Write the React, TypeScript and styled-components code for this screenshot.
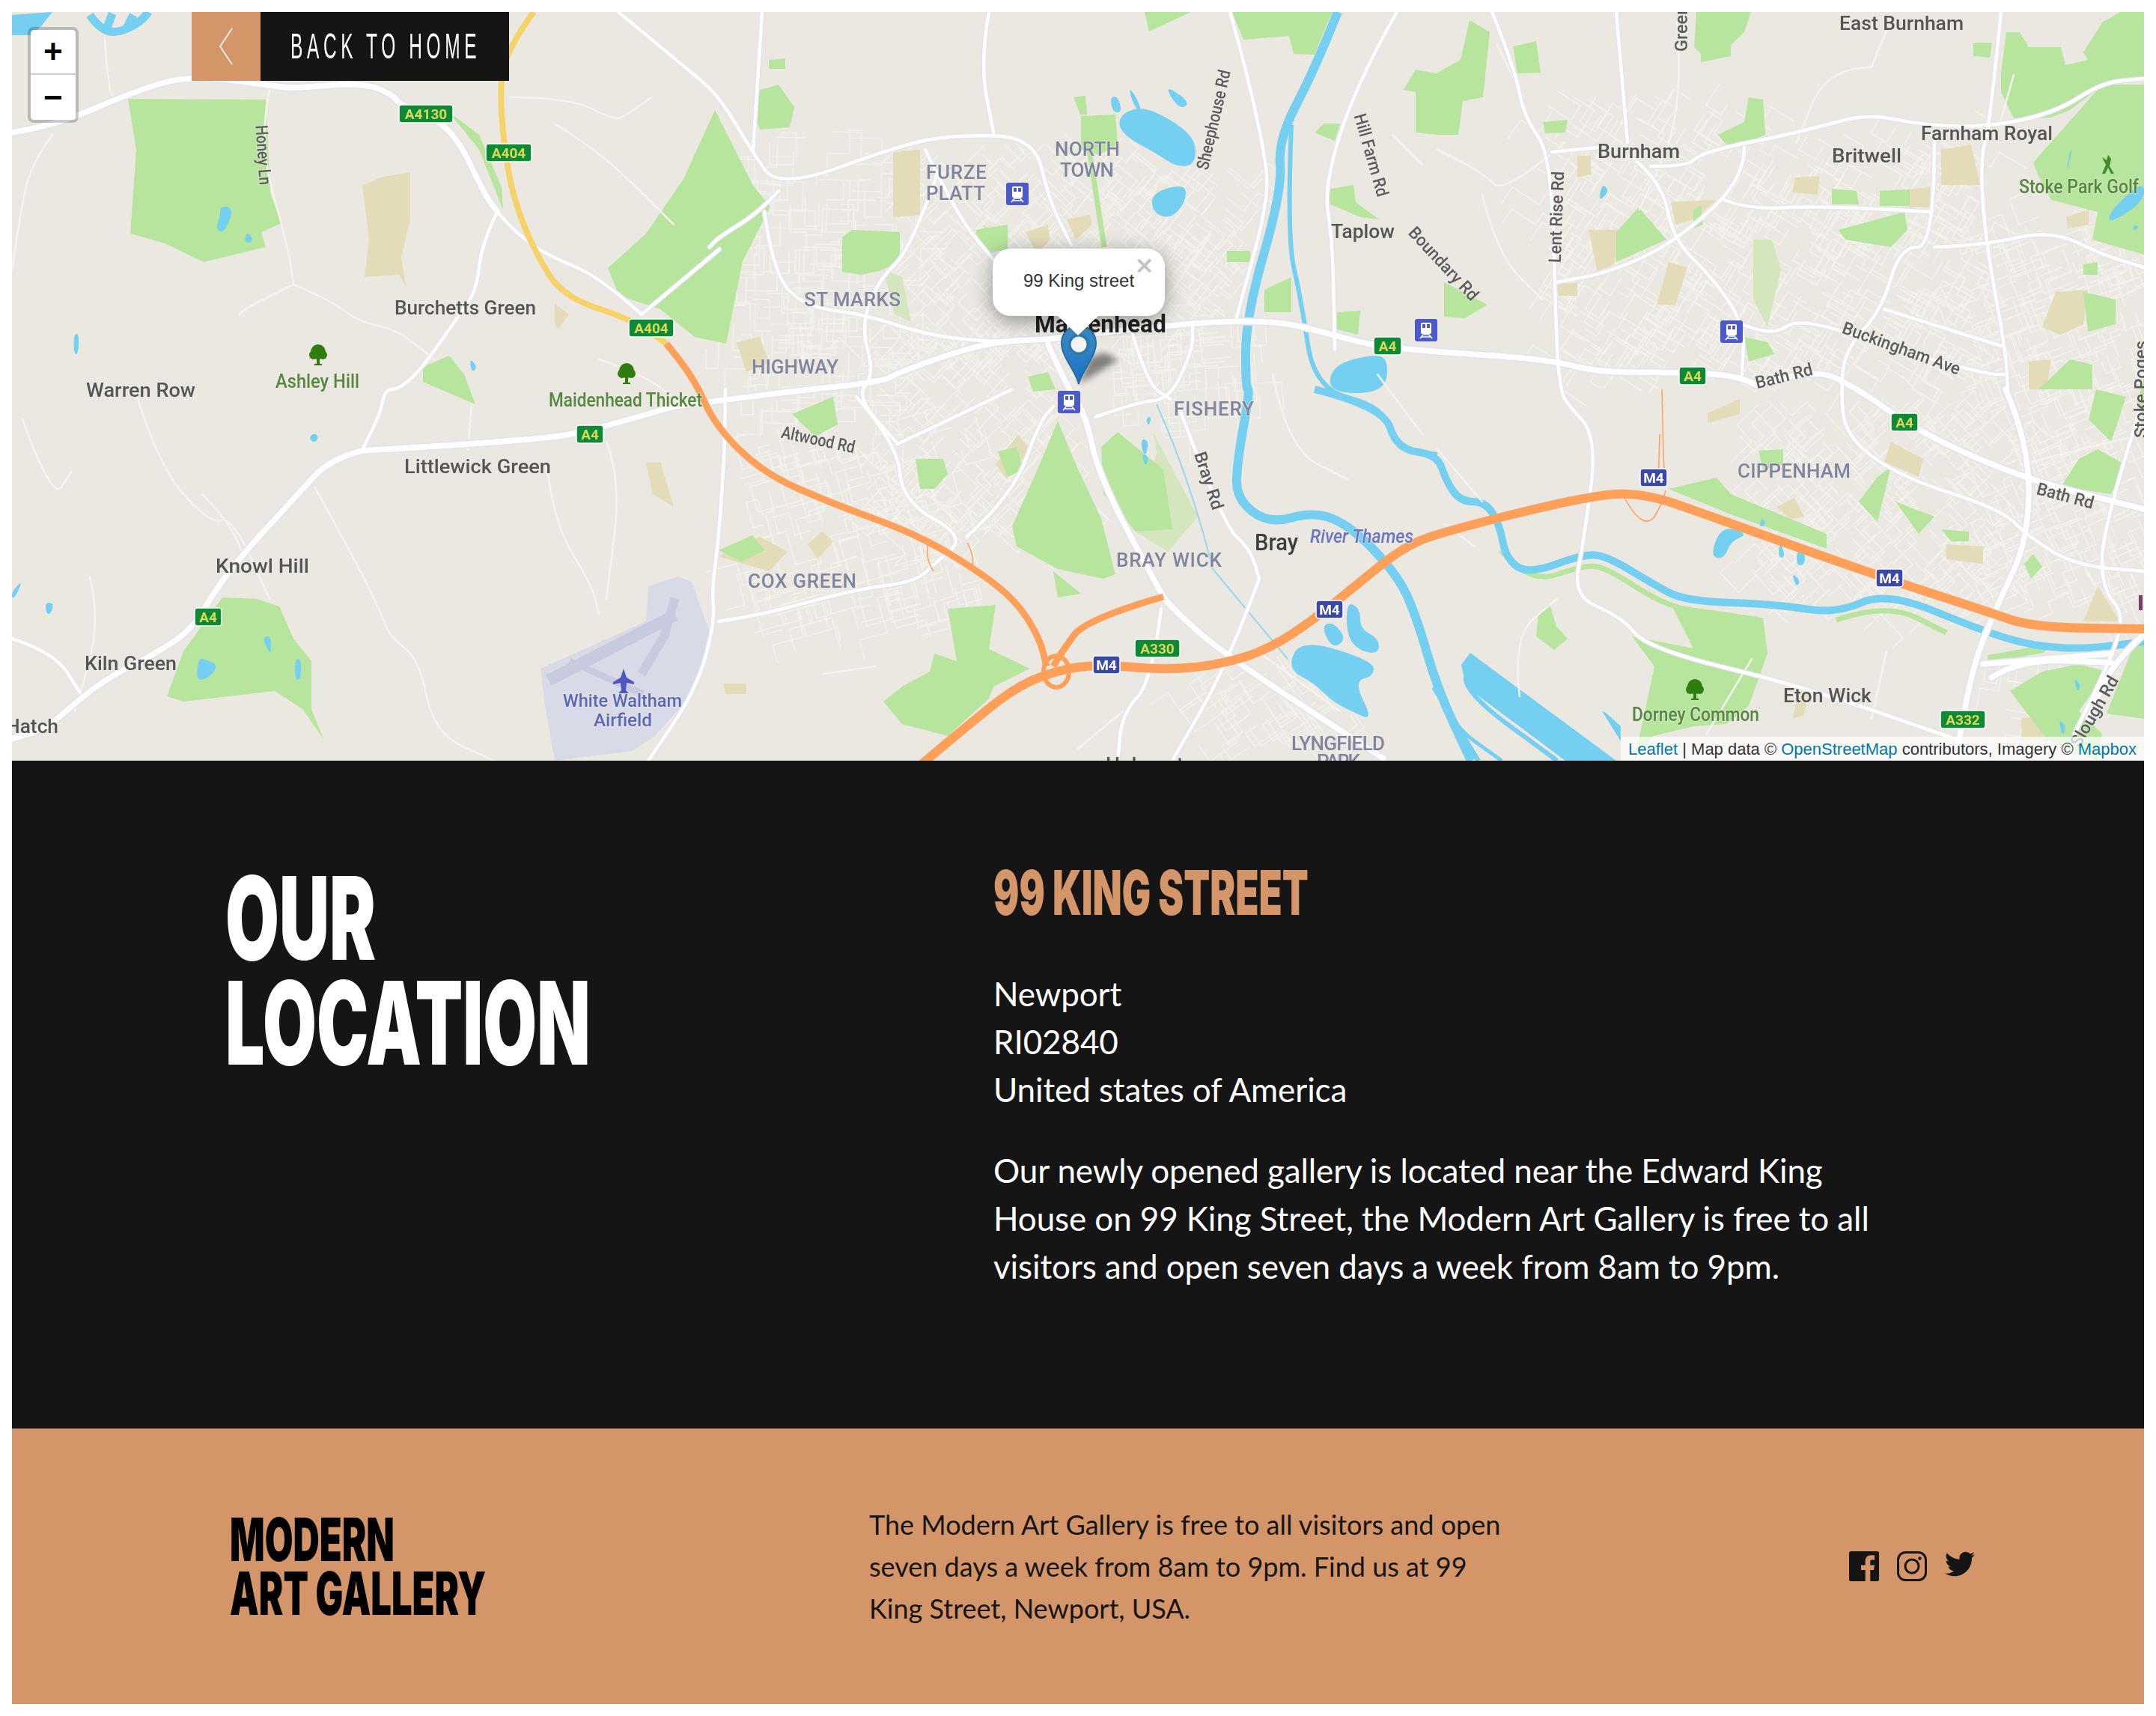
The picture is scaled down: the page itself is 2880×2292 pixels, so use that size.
import styled, { createGlobalStyle } from 'styled-components';
import { FaTwitter } from 'react-icons/fa';

const GlobalStyle = createGlobalStyle`
  body {
    margin: 16px;
    background: #fff;
    font-family: "Lato", "Liberation Sans", sans-serif;
  }
`;

const Page = styled.div`
  display: flex;
  flex-direction: column;
`;

/* ---------- map data: coordinates are page pixels ---------- */

const parks: number[][] = [
  [171, 132, 355, 133, 361, 257, 376, 298, 349, 310, 355, 330, 272, 350, 220, 325, 174, 312, 182, 200],
  [812, 358, 863, 312, 913, 239, 955, 147, 1006, 248, 1029, 276, 992, 349, 970, 459, 928, 450, 882, 413, 827, 395],
  [600, 150, 640, 180, 670, 250, 672, 280, 640, 200],
  [297, 798, 343, 800, 373, 810, 392, 853, 416, 883, 416, 947, 432, 987, 404, 947, 367, 923, 245, 937, 223, 930, 245, 870],
  [1529, 16, 1591, 16, 1535, 42],
  [1646, 16, 1780, 16, 1768, 43, 1756, 73, 1728, 72, 1722, 48, 1661, 53],
  [1875, 120, 1891, 93, 1920, 98, 1920, 180, 1891, 177, 1891, 123],
  [1920, 97, 1951, 80, 1963, 27, 1990, 43, 1981, 130, 1954, 135, 1948, 180, 1920, 180],
  [2021, 62, 2052, 55, 2058, 97, 2027, 98],
  [2266, 16, 2339, 16, 2330, 43, 2312, 60, 2312, 75, 2272, 83, 2272, 72, 2263, 63],
  [2673, 97, 2680, 43, 2698, 43, 2710, 63, 2753, 63, 2759, 87, 2789, 80, 2783, 70, 2808, 30, 2832, 16, 2864, 16, 2864, 103, 2814, 110, 2765, 147, 2740, 157, 2691, 160, 2673, 123],
  [2716, 217, 2808, 113, 2864, 113, 2864, 340, 2795, 320, 2802, 283, 2740, 267, 2722, 233],
  [2295, 180, 2330, 163, 2336, 130, 2355, 133, 2358, 180, 2336, 190, 2306, 193],
  [2456, 307, 2544, 283, 2548, 307, 2526, 330, 2465, 320],
  [1413, 562, 1437, 620, 1471, 693, 1490, 767, 1474, 773, 1413, 760, 1358, 730, 1352, 703, 1389, 620],
  [1407, 763, 1444, 793, 1413, 798],
  [1471, 597, 1493, 577, 1554, 627, 1566, 707, 1517, 710, 1474, 660],
  [1266, 813, 1330, 808, 1321, 867, 1376, 893, 1327, 917, 1321, 933, 1266, 983, 1205, 967, 1180, 937, 1205, 917, 1242, 897, 1248, 873, 1278, 883],
  [1058, 553, 1113, 530, 1119, 567, 1089, 583],
  [1223, 613, 1260, 613, 1266, 633, 1248, 653, 1229, 653],
  [1333, 603, 1358, 597, 1367, 627, 1346, 637],
  [960, 735, 1005, 715, 1022, 735, 990, 750],
  [1444, 155, 1490, 153, 1493, 193, 1468, 207, 1444, 200],
  [1434, 130, 1450, 128, 1452, 153, 1443, 153],
  [1125, 317, 1138, 307, 1202, 310, 1202, 350, 1174, 362, 1150, 367, 1125, 363],
  [1303, 307, 1346, 300, 1346, 333, 1321, 337],
  [1756, 177, 1768, 165, 1790, 165, 1783, 188],
  [1774, 253, 1808, 247, 1811, 270, 1842, 293, 1817, 290, 1777, 273],
  [1639, 335, 1670, 335, 1670, 350, 1639, 350],
  [1689, 387, 1725, 370, 1725, 417, 1689, 417],
  [1786, 417, 1817, 415, 1814, 447, 1786, 440],
  [1027, 80, 1049, 78, 1049, 92, 1027, 92],
  [1015, 120, 1040, 113, 1061, 143, 1055, 170, 1015, 173, 1009, 157],
  [1373, 503, 1400, 497, 1410, 520, 1380, 523],
  [1303, 310, 1340, 303, 1343, 330, 1320, 340],
  [2232, 807, 2355, 825, 2361, 873, 2336, 943, 2306, 967, 2263, 970, 2208, 983, 2183, 1016, 2210, 890, 2180, 850, 2262, 866, 2258, 858],
  [2055, 820, 2070, 807, 2079, 837, 2094, 853, 2076, 868, 2052, 850],
  [2229, 653, 2293, 638, 2312, 660, 2440, 713, 2440, 733, 2404, 720, 2312, 687],
  [2349, 602, 2382, 600, 2382, 620, 2355, 627],
  [2483, 670, 2508, 637, 2526, 623, 2508, 697],
  [2532, 670, 2584, 690, 2563, 713],
  [2593, 707, 2630, 710, 2630, 723, 2606, 723],
  [2777, 613, 2802, 600, 2838, 620, 2820, 660, 2753, 650],
  [2704, 753, 2716, 740, 2728, 757, 2713, 773],
  [2685, 923, 2728, 897, 2777, 887, 2814, 897, 2777, 950, 2808, 980, 2802, 1016, 2734, 987],
  [2814, 953, 2851, 860, 2864, 860, 2864, 960],
  [2655, 875, 2740, 860, 2730, 872, 2655, 885],
  [2061, 163, 2094, 160, 2091, 177, 2064, 178],
  [2189, 277, 2226, 320, 2159, 350, 2159, 310],
  [1929, 377, 1935, 380, 1987, 407, 1957, 425, 1929, 423],
  [2447, 252, 2480, 255, 2483, 273, 2447, 273],
  [2511, 255, 2551, 253, 2551, 275, 2511, 275],
  [2330, 450, 2361, 457, 2370, 473, 2336, 483],
  [2783, 390, 2826, 400, 2826, 433, 2789, 443],
  [2734, 510, 2765, 480, 2795, 487, 2795, 520, 2722, 520],
  [2783, 353, 2802, 350, 2802, 367, 2783, 367],
  [2636, 57, 2661, 57, 2658, 77, 2636, 75],
  [2262, 280, 2272, 275, 2275, 300, 2262, 305],
  [565, 490, 600, 475, 620, 500, 635, 540, 565, 510],
  [2800, 520, 2840, 530, 2820, 590, 2790, 560],
  [2855, 540, 2864, 500, 2864, 560],
];

const paleParks: number[][] = [
  [1540, 577, 1600, 690, 1560, 737, 1517, 710, 1566, 707],
  [2342, 320, 2367, 320, 2379, 360, 2361, 437, 2342, 400],
  [1180, 360, 1205, 370, 1217, 430, 1195, 420],
];

const sand: number[][] = [
  [508, 237, 548, 230, 548, 293, 536, 343, 542, 382, 533, 367, 487, 370, 493, 320, 484, 248],
  [1193, 203, 1229, 200, 1229, 287, 1193, 290],
  [1425, 293, 1456, 287, 1459, 300, 1437, 320],
  [984, 457, 1015, 450, 1027, 483, 997, 497],
  [2232, 270, 2293, 267, 2263, 293, 2238, 300],
  [2122, 307, 2165, 307, 2156, 353, 2134, 363],
  [2107, 208, 2125, 208, 2125, 233, 2107, 237],
  [2398, 237, 2431, 235, 2428, 260, 2394, 257],
  [2593, 200, 2633, 193, 2645, 247, 2593, 247],
  [2551, 253, 2578, 250, 2578, 277, 2551, 277],
  [2229, 350, 2254, 357, 2238, 407, 2213, 407],
  [2079, 380, 2107, 377, 2107, 395, 2082, 395],
  [2746, 390, 2789, 387, 2783, 433, 2753, 447, 2728, 437],
  [2710, 483, 2740, 480, 2734, 520, 2710, 520],
  [2517, 617, 2526, 590, 2569, 613, 2563, 637],
  [2600, 727, 2649, 730, 2649, 753, 2600, 747],
  [2281, 552, 2324, 533, 2324, 553, 2281, 565],
  [2373, 677, 2397, 665, 2410, 690, 2391, 693],
  [2783, 830, 2802, 783, 2832, 830],
  [1015, 717, 1052, 737, 1027, 763, 960, 743],
  [1079, 727, 1098, 710, 1113, 723, 1092, 747],
  [966, 913, 997, 913, 997, 927, 969, 927],
  [863, 618, 882, 617, 900, 677, 872, 660],
  [741, 405, 760, 420, 745, 440, 741, 430],
  [1313, 300, 1330, 310, 1320, 330],
  [1370, 310, 1400, 300, 1402, 320, 1385, 340],
  [1545, 605, 1570, 645, 1555, 660, 1538, 630],
  [2700, 90, 2710, 90, 2700, 100],
  [2760, 290, 2790, 280, 2790, 300, 2762, 305],
  [2400, 932, 2415, 925, 2410, 955, 2395, 960],
  [2700, 960, 2760, 950, 2760, 990, 2700, 990],
  [1330, 620, 1360, 580, 1375, 600, 1345, 640],
];

const lakes: number[][] = [
  [294, 275, 309, 277, 309, 290, 298, 312, 288, 305, 294, 290],
  [330, 310, 338, 318, 334, 325, 326, 322],
  [99, 445, 106, 447, 104, 475, 98, 470],
  [420, 578, 426, 584, 420, 592, 412, 585],
  [16, 790, 30, 775, 22, 795, 16, 800],
  [60, 805, 72, 805, 68, 820, 62, 820],
  [350, 852, 362, 848, 362, 872, 358, 868],
  [394, 880, 402, 880, 402, 908, 394, 908],
  [265, 880, 272, 880, 292, 888, 280, 905, 262, 910],
  [627, 478, 638, 490, 630, 498],
  [1493, 157, 1517, 143, 1548, 150, 1597, 183, 1597, 220, 1572, 223, 1548, 207, 1499, 180],
  [1483, 130, 1493, 128, 1499, 150, 1486, 150],
  [1507, 117, 1515, 125, 1526, 148, 1516, 145],
  [1554, 112, 1591, 137, 1575, 147],
  [1539, 257, 1584, 245, 1584, 270, 1563, 293, 1539, 283],
  [1780, 487, 1835, 473, 1855, 480, 1850, 525, 1774, 525],
  [1719, 893, 1738, 853, 1835, 883, 1835, 903, 1808, 910, 1835, 963, 1805, 950, 1780, 937, 1756, 913],
  [1765, 837, 1780, 830, 1799, 853, 1780, 867],
  [1799, 803, 1817, 813, 1817, 840, 1842, 853, 1842, 873, 1817, 870, 1799, 850],
  [2300, 702, 2336, 713, 2312, 723, 2303, 747, 2284, 743],
  [2353, 690, 2360, 700, 2350, 705],
  [2378, 722, 2385, 745, 2375, 745],
  [2400, 735, 2412, 740, 2410, 755, 2400, 755],
  [2393, 765, 2405, 775, 2400, 785],
  [1530, 560, 1538, 555, 1535, 570],
  [1525, 585, 1535, 590, 1530, 610, 1525, 600],
  [1525, 605, 1535, 610, 1530, 625],
  [2140, 245, 2150, 255, 2135, 270],
  [2765, 200, 2768, 200, 2760, 235],
  [2864, 240, 2820, 280, 2815, 300, 2864, 270],
  [2850, 300, 2858, 302, 2850, 310],
  [2770, 905, 2780, 915, 2775, 925],
  [2750, 960, 2760, 970, 2755, 985],
];

// shapes with straight edges: the rowing lake and the top corner pools
const sharpLakes: number[][] = [
  [1952, 888, 1964, 872, 2159, 1016, 2091, 1016, 1958, 917],
  [16, 20, 70, 16, 55, 35, 40, 47, 16, 47],
  [2140, 950, 2145, 952, 2165, 970, 2165, 990],
];

const rivers: [number, number[]][] = [
  [12, [1787, 16, 1756, 93, 1707, 187, 1713, 253, 1664, 423, 1664, 520, 1670, 520, 1652, 620, 1652, 667, 1695, 700, 1756, 683, 1805, 703, 1866, 767, 1891, 820, 1920, 920, 1965, 1016]],
  [6, [1725, 167, 1719, 317, 1738, 400, 1756, 520, 1848, 543, 1866, 600, 1920, 607]],
  [10, [1756, 520, 1848, 543, 1866, 600, 1920, 607, 1932, 643, 1951, 670, 1984, 670, 2003, 700, 2012, 747, 2042, 767, 2116, 740, 2147, 743, 2208, 780, 2251, 803, 2373, 807, 2453, 820, 2520, 790, 2649, 843, 2716, 863, 2789, 867, 2864, 857]],
  [5, [1920, 907, 1932, 963, 2006, 1016]],
  [6, [1958, 905, 1956, 925, 2080, 1016]],
];

const riverBanks: number[][] = [
  [2005, 735, 2042, 780, 2116, 755, 2145, 758, 2210, 800, 2252, 815],
  [2453, 828, 2520, 805, 2600, 845],
];

const majorRoads: number[][] = [
  [16, 177, 73, 168, 184, 120, 257, 100, 367, 115, 392, 118, 484, 110, 526, 127, 533, 140, 603, 167, 649, 263, 664, 282],
  [484, 602, 722, 588, 796, 573, 900, 543],
  [484, 602, 441, 613, 398, 660, 318, 747, 282, 797, 257, 840, 208, 873, 135, 910, 80, 957, 61, 973, 16, 987],
  [900, 543, 1035, 525, 1180, 510, 1200, 497, 1317, 457, 1400, 453],
  [1400, 453, 1560, 433, 1701, 427, 1780, 447, 1835, 462, 1920, 470, 2067, 480, 2134, 497, 2214, 497, 2312, 500, 2349, 515],
  [2349, 515, 2422, 490, 2483, 520, 2563, 577, 2704, 640, 2864, 680],
  [1400, 460, 1427, 520, 1450, 553, 1468, 637, 1548, 787, 1560, 807, 1633, 873, 1848, 1013],
  [2649, 887, 2820, 873],
  [2660, 905, 2700, 880, 2820, 885],
  [2864, 847, 2820, 887, 2790, 960],
  [2679, 520, 2710, 590, 2710, 720, 2667, 810, 2636, 887, 2618, 983, 2612, 1016],
];

const secondaryRoads: number[][] = [
  [857, 420, 802, 370, 729, 340, 692, 313, 664, 283],
  [857, 420, 961, 333],
  [664, 283, 643, 327, 637, 387, 612, 423, 563, 493, 533, 520, 514, 520, 508, 553, 484, 600],
  [826, 16, 912, 87, 960, 127, 1003, 200, 1040, 253, 1205, 193, 1278, 180, 1382, 183, 1401, 267, 1431, 327],
  [1040, 255, 1015, 283, 960, 317, 948, 330],
  [1021, 283, 1033, 367, 1076, 410, 1156, 420, 1236, 447, 1321, 457, 1401, 453],
  [1236, 200, 1278, 287, 1327, 347],
  [1254, 227, 1217, 333, 1174, 373, 1150, 433, 1168, 500, 1144, 530, 1199, 593],
  [969, 520, 969, 587, 960, 720, 951, 787, 955, 830, 931, 920, 866, 1016],
  [1144, 530, 1199, 593, 1205, 670, 1291, 717, 1248, 753, 1223, 777, 1144, 787, 1021, 820, 960, 830],
  [1291, 717, 1352, 663, 1389, 563, 1407, 543],
  [1199, 593, 1248, 570, 1352, 520],
  [1551, 813, 1539, 910, 1499, 953, 1493, 1016],
  [1682, 773, 1640, 887, 1566, 1016],
  [1572, 537, 1633, 700, 1670, 733, 1682, 773],
  [1463, 557, 1520, 537, 1563, 533, 1593, 467, 1593, 437],
  [1513, 447, 1533, 513, 1563, 533],
  [1018, 16, 1006, 200],
  [1321, 16, 1309, 83, 1327, 177],
  [1643, 16, 1658, 67, 1689, 200, 1695, 267, 1652, 423],
  [1866, 16, 1811, 113, 1768, 250, 1780, 317, 1783, 467],
  [1993, 16, 2024, 93, 2036, 157, 2073, 207, 2079, 467, 2085, 520, 2091, 537, 2134, 583, 2116, 720, 2101, 797, 2165, 823, 2202, 867, 2410, 917, 2612, 987],
  [2159, 16, 2174, 190],
  [2073, 203, 2134, 197],
  [2183, 213, 2220, 243, 2235, 320, 2287, 370, 2330, 433, 2327, 500],
  [2205, 222, 2254, 222, 2269, 207, 2312, 195, 2373, 183, 2428, 170, 2495, 152, 2569, 167, 2655, 170, 2747, 150, 2808, 110, 2864, 105],
  [2330, 197, 2330, 240, 2238, 323, 2153, 363, 2079, 377],
  [2303, 267, 2336, 280, 2428, 275, 2581, 283],
  [2584, 190, 2584, 330, 2538, 330, 2514, 413, 2465, 467, 2459, 520, 2465, 583, 2538, 637, 2673, 680, 2710, 717, 2771, 755, 2864, 763],
  [2584, 330, 2648, 328, 2740, 307, 2808, 340, 2864, 357],
  [2673, 16, 2658, 167, 2645, 213, 2652, 320, 2679, 467, 2682, 520],
  [2327, 433, 2367, 450, 2404, 423, 2532, 467, 2655, 500, 2679, 500],
  [2517, 413, 2673, 462],
  [2857, 553, 2808, 707, 2808, 787, 2838, 820, 2820, 880, 2771, 980],
  [16, 853, 73, 872, 107, 925],
];

const lanes: number[][] = [
  [140, 50, 145, 130, 160, 130],
  [70, 180, 40, 220, 25, 300, 16, 360],
  [360, 120, 345, 190, 385, 330, 392, 380],
  [392, 380, 330, 410, 320, 420],
  [392, 380, 440, 400, 480, 430, 530, 440, 580, 480],
  [680, 130, 760, 130, 820, 160, 835, 155, 870, 130],
  [800, 480, 860, 500, 910, 540],
  [740, 165, 800, 200, 900, 300],
  [30, 560, 70, 670, 95, 630],
  [180, 520, 210, 620, 280, 700, 310, 690, 360, 800],
  [270, 660, 310, 700, 330, 760],
  [420, 650, 470, 740, 510, 820, 520, 850, 560, 880, 580, 980, 660, 1016],
  [630, 540, 625, 600],
  [120, 770, 135, 830, 100, 950],
  [730, 620, 740, 700, 790, 780, 800, 820],
  [810, 590, 830, 640, 810, 800],
  [1100, 900, 1170, 890],
  [2090, 190, 2010, 260, 1980, 230, 1920, 200],
  [1980, 260, 2000, 340, 2060, 400],
  [2000, 60, 2035, 130],
  [2240, 30, 2250, 150, 2190, 280],
  [2500, 90, 2440, 90, 2400, 190],
  [2520, 40, 2500, 90],
  [1900, 220, 1860, 180],
  [2690, 100, 2670, 170],
  [1980, 670, 1920, 600],
  [2030, 930, 2020, 850, 2080, 800],
  [2340, 880, 2280, 980],
  [2520, 870, 2500, 960],
  [1700, 500, 1720, 600, 1800, 640],
  [1840, 500, 1900, 580],
  [1500, 950, 1440, 1000],
  [1680, 870, 1790, 950],
  [1930, 700, 1970, 730],
  [2860, 580, 2700, 620],
];

type LabelKind = 'town' | 'city' | 'road' | 'area' | 'nature' | 'air' | 'water';
type LabelData = { t: string; x: number; y: number; w: number; k: LabelKind; r?: number };

const labels: LabelData[] = [
  { t: 'Honey Ln', x: 312, y: 215, w: 80, k: 'road', r: 86 },
  { t: 'Burchetts Green', x: 527, y: 420, w: 189, k: 'town' },
  { t: 'Warren Row', x: 115, y: 530, w: 146, k: 'town' },
  { t: 'Ashley Hill', x: 368, y: 518, w: 112, k: 'nature' },
  { t: 'Maidenhead Thicket', x: 733, y: 543, w: 205, k: 'nature' },
  { t: 'Littlewick Green', x: 540, y: 632, w: 196, k: 'town' },
  { t: 'Knowl Hill', x: 288, y: 765, w: 125, k: 'town' },
  { t: 'Kiln Green', x: 113, y: 895, w: 123, k: 'town' },
  { t: 'Hatch', x: 8, y: 979, w: 70, k: 'town' },
  { t: 'White Waltham', x: 752, y: 944, w: 159, k: 'air' },
  { t: 'Airfield', x: 793, y: 970, w: 78, k: 'air' },
  { t: 'Altwood Rd', x: 1043, y: 595, w: 100, k: 'road', r: 12 },
  { t: 'FURZE', x: 1237, y: 239, w: 81, k: 'area' },
  { t: 'PLATT', x: 1237, y: 267, w: 79, k: 'area' },
  { t: 'NORTH', x: 1409, y: 208, w: 87, k: 'area' },
  { t: 'TOWN', x: 1416, y: 236, w: 72, k: 'area' },
  { t: 'ST MARKS', x: 1074, y: 409, w: 129, k: 'area' },
  { t: 'HIGHWAY', x: 1004, y: 499, w: 116, k: 'area' },
  { t: 'Sheephouse Rd', x: 1553, y: 168, w: 136, k: 'road', r: -77 },
  { t: 'Hill Farm Rd', x: 1775, y: 215, w: 114, k: 'road', r: 74 },
  { t: 'Boundary Rd', x: 1866, y: 360, w: 125, k: 'road', r: 47 },
  { t: 'Taplow', x: 1778, y: 318, w: 85, k: 'town' },
  { t: 'Green', x: 2215, y: 46, w: 62, k: 'road', r: -90 },
  { t: 'East Burnham', x: 2457, y: 40, w: 166, k: 'town' },
  { t: 'Burnham', x: 2134, y: 211, w: 110, k: 'town' },
  { t: 'Britwell', x: 2447, y: 217, w: 93, k: 'town' },
  { t: 'Farnham Royal', x: 2566, y: 187, w: 176, k: 'town' },
  { t: 'Stoke Park Golf', x: 2697, y: 258, w: 160, k: 'nature' },
  { t: 'Lent Rise Rd', x: 2018, y: 298, w: 122, k: 'road', r: -88 },
  { t: 'Buckingham Ave', x: 2457, y: 473, w: 166, k: 'road', r: 20 },
  { t: 'Bath Rd', x: 2344, y: 510, w: 78, k: 'road', r: -14 },
  { t: 'Bath Rd', x: 2720, y: 670, w: 78, k: 'road', r: 15 },
  { t: 'Stoke Poges', x: 2795, y: 528, w: 130, k: 'road', r: -90 },
  { t: 'CIPPENHAM', x: 2321, y: 638, w: 151, k: 'area' },
  { t: 'Dorney Common', x: 2180, y: 963, w: 170, k: 'nature' },
  { t: 'Eton Wick', x: 2382, y: 938, w: 118, k: 'town' },
  { t: 'Slough Rd', x: 2745, y: 958, w: 105, k: 'road', r: -60 },
  { t: 'FISHERY', x: 1568, y: 555, w: 107, k: 'area' },
  { t: 'Bray Rd', x: 1575, y: 650, w: 80, k: 'road', r: 72 },
  { t: 'Bray', x: 1676, y: 735, w: 58, k: 'city' },
  { t: 'River Thames', x: 1750, y: 725, w: 138, k: 'water' },
  { t: 'BRAY WICK', x: 1491, y: 757, w: 141, k: 'area' },
  { t: 'COX GREEN', x: 999, y: 785, w: 145, k: 'area' },
  { t: 'LYNGFIELD', x: 1725, y: 1002, w: 125, k: 'area' },
  { t: 'PARK', x: 1759, y: 1026, w: 58, k: 'area' },
  { t: 'Holyport', x: 1477, y: 1030, w: 104, k: 'town' },
];

const shields: [string, number, number, number, 'a' | 'm'][] = [
  ['A4130', 533, 140, 72, 'a'],
  ['A404', 649, 192, 61, 'a'],
  ['A404', 840, 426, 60, 'a'],
  ['A4', 770, 568, 36, 'a'],
  ['A4', 260, 812, 36, 'a'],
  ['M4', 1460, 876, 36, 'm'],
  ['A330', 1516, 854, 60, 'a'],
  ['M4', 1758, 802, 36, 'm'],
  ['A4', 1835, 450, 37, 'a'],
  ['A4', 2243, 490, 36, 'a'],
  ['A4', 2526, 552, 36, 'a'],
  ['M4', 2191, 626, 36, 'm'],
  ['M4', 2506, 760, 36, 'm'],
  ['A332', 2592, 949, 60, 'a'],
];

const stations: [number, number][] = [
  [1344, 244],
  [1413, 522],
  [1890, 426],
  [2298, 428],
];

const towns: [number, number, number, number, number][] = [
  [960, 200, 1200, 560, 150],
  [1000, 560, 1300, 820, 130],
  [1220, 180, 1420, 460, 110],
  [1440, 180, 1650, 430, 110],
  [1160, 440, 1440, 700, 130],
  [1500, 420, 1680, 560, 60],
  [1600, 870, 1780, 1000, 45],
  [2060, 120, 2320, 480, 170],
  [2320, 170, 2640, 500, 200],
  [2640, 290, 2864, 520, 120],
  [2340, 530, 2680, 800, 190],
  [2670, 520, 2864, 800, 110],
  [2660, 870, 2800, 960, 25],
];

const poly = (p: number[]) => p.join(' ');

const curve = (p: number[]) => {
  let d = `M${p[0]} ${p[1]}`;
  for (let i = 2; i < p.length - 2; i += 2) {
    d += ` Q${p[i]} ${p[i + 1]} ${(p[i] + p[i + 2]) / 2} ${(p[i + 1] + p[i + 3]) / 2}`;
  }
  return `${d} L${p[p.length - 2]} ${p[p.length - 1]}`;
};

// closed, rounded outline for lakes
const blob = (p: number[]) => {
  const n = p.length;
  let d = `M${(p[n - 2] + p[0]) / 2} ${(p[n - 1] + p[1]) / 2}`;
  for (let i = 0; i < n; i += 2) {
    const nx = p[(i + 2) % n];
    const ny = p[(i + 3) % n];
    d += ` Q${p[i]} ${p[i + 1]} ${(p[i] + nx) / 2} ${(p[i + 1] + ny) / 2}`;
  }
  return `${d} Z`;
};

// little side streets, scattered over each built-up area
const buildStreets = () => {
  let seed = 1234;
  const rnd = () => {
    seed = (seed * 16807) % 2147483647;
    return seed / 2147483647;
  };
  const out: string[] = [];
  towns.forEach(([x0, y0, x1, y1, n]) => {
    const base = rnd() * 1.5;
    for (let i = 0; i < n; i++) {
      let x = Math.round(x0 + rnd() * (x1 - x0));
      let y = Math.round(y0 + rnd() * (y1 - y0));
      let d = `M${x} ${y}`;
      let a = base + (rnd() > 0.5 ? 0 : Math.PI / 2);
      for (let s = 0; s < 3; s++) {
        const len = 14 + rnd() * 30;
        x = Math.round(x + Math.cos(a) * len);
        y = Math.round(y + Math.sin(a) * len);
        d += ` L${x} ${y}`;
        a += rnd() > 0.5 ? Math.PI / 2 : -Math.PI / 2;
      }
      out.push(d);
    }
  });
  return out.join(' ');
};

const streets = buildStreets();

/* ---------- styled parts ---------- */

const MapPanel = styled.section`
  position: relative;
  height: 1000px;
  overflow: hidden;
  background: #ebe8e2;
`;

const MapCanvas = styled.svg`
  display: block;
  width: 100%;
  height: 100%;
  filter: blur(0.7px);
`;

const labelFills: Record<LabelKind, string> = {
  town: '#555',
  city: '#3d3d3d',
  road: '#5c5c5c',
  area: '#80859f',
  nature: '#55883f',
  air: '#5a66b8',
  water: '#6a76c0',
};

const MapLabel = styled.text<{ $kind: LabelKind }>`
  font-family: "Roboto", "Liberation Sans", sans-serif;
  font-size: ${(p) => (p.$kind === 'city' ? 32 : p.$kind === 'road' ? 23 : p.$kind === 'air' ? 24 : 26)}px;
  font-weight: 500;
  font-style: ${(p) => (p.$kind === 'water' ? 'italic' : 'normal')};
  fill: ${(p) => labelFills[p.$kind]};
  stroke: rgba(236, 233, 227, 0.6);
  stroke-width: 2px;
  paint-order: stroke;
`;

const CityLabel = styled.text`
  font-family: "Roboto", "Liberation Sans", sans-serif;
  font-size: 34px;
  font-weight: 700;
  fill: #222;
`;

const ShieldText = styled.text`
  font-family: "Roboto", "Liberation Sans", sans-serif;
  font-size: 19px;
  font-weight: 700;
  text-anchor: middle;
`;

const ZoomControl = styled.div`
  position: absolute;
  top: 20px;
  left: 21px;
  width: 60px;
  border: 4px solid rgba(0, 0, 0, 0.2);
  border-radius: 8px;
  background-clip: padding-box;
`;

const ZoomButton = styled.a<{ $first?: boolean }>`
  display: flex;
  align-items: center;
  justify-content: center;
  width: 60px;
  height: 60px;
  box-sizing: border-box;
  padding-top: 5px;
  background: #fff;
  color: #000;
  font: bold 44px "Liberation Mono", monospace;
  border-radius: ${(p) => (p.$first ? '5px 5px 0 0' : '0 0 5px 5px')};
  border-bottom: ${(p) => (p.$first ? '2px solid #ccc' : 'none')};
`;

const BackLink = styled.a`
  position: absolute;
  top: 0;
  left: 240px;
  display: flex;
  height: 92px;
  background: #151515;
`;

const BackIcon = styled.span`
  display: flex;
  align-items: center;
  justify-content: center;
  width: 92px;
  background: #d49569;
`;

const BackLabel = styled.span`
  display: block;
  width: 332px;
  padding-left: 40px;
  box-sizing: border-box;
  font: 400 49px/90px "Liberation Sans", sans-serif;
  letter-spacing: 11.2px;
  color: #fff;
  white-space: nowrap;
  transform: scaleX(0.5);
  transform-origin: 40px 0;
`;

const MarkerPin = styled.svg`
  position: absolute;
  left: 1400px;
  top: 417px;
  overflow: visible;
`;

const Popup = styled.div`
  position: absolute;
  left: 1310px;
  top: 316px;
  width: 230px;
  height: 90px;
  box-sizing: border-box;
  padding-top: 26px;
  border-radius: 24px;
  background: #fff;
  box-shadow: 0 6px 28px rgba(0, 0, 0, 0.4);
  text-align: center;
  font: 24px/34px "Liberation Sans", sans-serif;
  color: #333;
`;

const PopupTip = styled.span`
  position: absolute;
  top: 100%;
  left: 87px;
  border-style: solid;
  border-width: 26px 27px 0;
  border-color: #fff transparent transparent;
`;

const PopupClose = styled.span`
  position: absolute;
  top: 4px;
  right: 14px;
  font: bold 32px/36px "DejaVu Sans", sans-serif;
  color: #c3c3c3;
`;

const Attribution = styled.div`
  position: absolute;
  right: 0;
  bottom: 0;
  padding: 0 10px;
  height: 32px;
  background: rgba(255, 255, 255, 0.7);
  font: 22px/33px "Liberation Sans", sans-serif;
  color: #333;
  white-space: nowrap;
`;

const AttributionLink = styled.a`
  color: #0078a8;
`;

const LocationSection = styled.section`
  display: grid;
  grid-template-columns: 1026px 1fr;
  height: 892px;
  box-sizing: border-box;
  padding: 140px 285px 0;
  background: #151515;
`;

const Heading = styled.h1`
  margin: 0;
  font: 900 154px/140px "Inter", "Liberation Sans", sans-serif;
  color: #fff;
  white-space: nowrap;
  transform: scaleX(0.603);
  transform-origin: left top;
`;

const Details = styled.div`
  margin-top: -6px;
  color: #fff;
  font-size: 44px;
  letter-spacing: -0.1px;
  line-height: 64px;
`;

const StreetTitle = styled.h2`
  margin: 0 0 61px;
  font: 900 83px/84px "Inter", "Liberation Sans", sans-serif;
  letter-spacing: 0;
  color: #d49569;
  white-space: nowrap;
  transform: scaleX(0.614);
  transform-origin: left top;
`;

const Paragraph = styled.p`
  margin: 0 0 44px;
`;

const SiteFooter = styled.footer`
  display: grid;
  grid-template-columns: 854px 1fr auto;
  align-items: center;
  height: 368px;
  box-sizing: border-box;
  padding: 0 226px 0 291px;
  background: #d49569;
  color: #151515;
`;

const Logo = styled.div`
  font: 900 80px/72px "Inter", "Liberation Sans", sans-serif;
  color: #000;
  white-space: nowrap;
  transform: scaleX(0.61);
  transform-origin: left center;
`;

const Blurb = styled.p`
  margin: 0;
  font-size: 36px;
  line-height: 56px;
`;

const Socials = styled.div`
  display: flex;
  gap: 24px;
  align-items: flex-start;
  line-height: 0;
`;

const TwitterIcon = styled(FaTwitter)`
  width: 40px;
  height: 40px;
  margin-top: -3px;
`;

const FacebookIcon = () => (
  <svg width="40" height="40" viewBox="0 0 40 40">
    <rect width="40" height="40" rx="2.5" fill="#151515" />
    <path d="M21.7 40 V25 H16 V18.5 H21.7 V13 C21.7 8 25 5.3 29 5.3 H34 V11.5 H30.5 C28.8 11.5 28.3 12.3 28.3 14 V18.5 H34 L33 25 H28.3 V40 Z" fill="#d49569" />
  </svg>
);

const InstagramIcon = () => (
  <svg width="40" height="40" viewBox="0 0 40 40" fill="none" stroke="#151515" strokeWidth="3">
    <rect x="1.5" y="1.5" width="37" height="37" rx="10" />
    <circle cx="20" cy="20" r="9" />
    <circle cx="30.5" cy="9.5" r="2.2" fill="#151515" stroke="none" />
  </svg>
);

const Tree = ({ x, y }: { x: number; y: number }) => (
  <g fill="#2f7d0e">
    <circle cx={x} cy={y - 6} r="10" />
    <circle cx={x - 6} cy={y - 2} r="6" />
    <circle cx={x + 6} cy={y - 2} r="6" />
    <rect x={x - 2} y={y} width="4" height="12" />
    <rect x={x - 5} y={y + 10} width="10" height="2" />
  </g>
);

const Station = ({ x, y }: { x: number; y: number }) => (
  <g>
    <rect x={x} y={y} width="30" height="30" rx="3" fill="#4b5ac8" />
    <rect x={x + 8} y={y + 5} width="14" height="15" rx="2" fill="#fff" />
    <rect x={x + 10} y={y + 7} width="4" height="5" fill="#4b5ac8" />
    <rect x={x + 16} y={y + 7} width="4" height="5" fill="#4b5ac8" />
    <path d={`M${x + 7} ${y + 26} L${x + 11} ${y + 21} H${x + 19} L${x + 23} ${y + 26} M${x + 9} ${y + 24} H${x + 21}`} stroke="#fff" strokeWidth="1.6" fill="none" />
  </g>
);

const Shield = ({ text, x, y, w, kind }: { text: string; x: number; y: number; w: number; kind: 'a' | 'm' }) => (
  <g>
    <rect x={x} y={y} width={w} height="24" rx="4" fill={kind === 'a' ? '#0e8a36' : '#3a49a8'} stroke="#fff" strokeWidth="1.5" />
    <ShieldText x={x + w / 2} y={y + 19} fill={kind === 'a' ? '#dcd75a' : '#fff'}>{text}</ShieldText>
  </g>
);

const MapLayer = () => (
  <MapCanvas viewBox="16 16 2848 1000" preserveAspectRatio="none">
    <rect x="16" y="16" width="2848" height="1000" fill="#ebe8e2" />
    <path d={streets} fill="none" stroke="#f3f1ec" strokeWidth="1.5" />
    <g fill="#e4dcb9">
      {sand.map((p, i) => <polygon key={i} points={poly(p)} />)}
    </g>
    <g fill="#d4e6bd">
      {paleParks.map((p, i) => <polygon key={i} points={poly(p)} />)}
    </g>
    <g fill="#b7e59d">
      {parks.map((p, i) => <polygon key={i} points={poly(p)} />)}
    </g>
    <g fill="none" stroke="#b7e59d" strokeWidth="7">
      {riverBanks.map((p, i) => <path key={i} d={curve(p)} />)}
      <path d="M1455 200 L1475 330" />
    </g>
    <g fill="#d8dbe7">
      <polygon points="722,893 863,830 866,783 906,770 924,777 949,847 931,920 875,983 845,1003 741,1016 728,943" />
    </g>
    <g fill="none" stroke="#c8cbdf" strokeWidth="16" strokeLinecap="square">
      <path d="M740 905 L895 825" />
      <path d="M900 805 L887 850 L860 895" strokeWidth="12" />
      <path d="M765 885 L855 925" strokeWidth="9" />
    </g>
    <g fill="#75cff1">
      {lakes.map((p, i) => <path key={i} d={blob(p)} />)}
      {sharpLakes.map((p, i) => <polygon key={i} points={poly(p)} />)}
    </g>
    <g fill="none" stroke="#75cff1" strokeLinejoin="round">
      {rivers.map(([w, p], i) => <path key={i} d={curve(p)} strokeWidth={w} />)}
      <path d="M1915 918 L1975 1016" strokeWidth="6" />
      <path d="M120 20 Q140 50 165 40 Q190 30 198 16 M150 18 L142 40 M178 20 L170 36" strokeWidth="11" />
    </g>
    <path d="M1545 540 Q1590 640 1620 760 L1720 880" fill="none" stroke="#9ad8f2" strokeWidth="2" />
    <g fill="none" stroke="#f5f3ef" strokeWidth="2.5" strokeLinecap="round">
      {lanes.map((p, i) => <path key={i} d={curve(p)} />)}
    </g>
    <g fill="none" stroke="#e2e3ee" strokeWidth="7" strokeLinejoin="round" strokeLinecap="round">
      {secondaryRoads.map((p, i) => <path key={i} d={curve(p)} />)}
    </g>
    <g fill="none" stroke="#e2e3ee" strokeWidth="11" strokeLinejoin="round" strokeLinecap="round">
      {majorRoads.map((p, i) => <path key={i} d={curve(p)} />)}
    </g>
    <g fill="none" stroke="#fff" strokeWidth="4.5" strokeLinejoin="round" strokeLinecap="round">
      {secondaryRoads.map((p, i) => <path key={i} d={curve(p)} />)}
    </g>
    <g fill="none" stroke="#fff" strokeWidth="7.5" strokeLinejoin="round" strokeLinecap="round">
      {majorRoads.map((p, i) => <path key={i} d={curve(p)} />)}
    </g>
    <path d={curve([713, 16, 683, 57, 667, 110, 673, 193, 686, 267, 716, 340, 753, 397, 845, 427, 890, 459])} fill="none" stroke="#f5d26a" strokeWidth="8" />
    <g fill="none" stroke="#ffa05a" strokeLinejoin="round">
      <path d={curve([890, 459, 925, 500, 955, 569, 1021, 633, 1113, 673, 1223, 713, 1303, 760, 1358, 803, 1389, 853, 1398, 890])} strokeWidth="9" />
      <path d={curve([1554, 797, 1450, 827, 1419, 870, 1407, 890])} strokeWidth="9" />
      <path d={curve([1232, 1020, 1303, 960, 1364, 913, 1425, 892, 1477, 888, 1560, 895, 1633, 887, 1695, 867, 1756, 827, 1817, 777, 1872, 733, 1920, 712, 2122, 662, 2195, 658, 2287, 690, 2502, 767, 2655, 817, 2716, 838, 2864, 840])} strokeWidth="12" />
      <ellipse cx="1411" cy="897" rx="17" ry="21" strokeWidth="6" />
      <path d="M1240 725 Q1235 745 1247 763 M1292 725 Q1303 745 1298 760" strokeWidth="1.5" />
      <path d="M2220 520 L2222 610 L2225 650 M2217 580 L2215 650 M2170 665 Q2195 710 2210 690 Q2222 670 2225 655" strokeWidth="1.5" />
    </g>
    {stations.map(([x, y], i) => <Station key={i} x={x} y={y} />)}
    <Tree x={425} y={476} />
    <Tree x={837} y={501} />
    <Tree x={2264} y={923} />
    <path d="M833 893 L837 905 L847 911 L847 914 L837 912 L836 922 L840 926 L826 926 L830 922 L829 912 L819 914 L819 911 L829 905 Z" fill="#4a58c4" />
    <path d="M2816 207 L2820 212 L2818 222 L2824 232 L2820 232 L2816 224 L2812 232 L2808 232 L2813 220 L2808 210 L2814 214 Z" fill="#3f8a2a" />
    <rect x="2857" y="795" width="5" height="20" fill="#7a3d6a" />
    <CityLabel x="1382" y="444" textLength="176" lengthAdjust="spacingAndGlyphs">Maidenhead</CityLabel>
    {labels.map((l, i) => (
      <MapLabel
        key={i}
        $kind={l.k}
        x={l.x}
        y={l.y}
        textLength={l.w}
        lengthAdjust={l.k === 'area' ? 'spacing' : 'spacingAndGlyphs'}
        transform={l.r ? `rotate(${l.r} ${l.x + l.w / 2} ${l.y - 8})` : undefined}
      >
        {l.t}
      </MapLabel>
    ))}
    {shields.map(([t, x, y, w, k], i) => <Shield key={i} text={t} x={x} y={y} w={w} kind={k} />)}
  </MapCanvas>
);

export default function App() {
  return (
    <Page>
      <GlobalStyle />
      <MapPanel>
        <MapLayer />
        <ZoomControl>
          <ZoomButton $first>+</ZoomButton>
          <ZoomButton>−</ZoomButton>
        </ZoomControl>
        <BackLink>
          <BackIcon>
            <svg width="20" height="52" viewBox="0 0 20 52" fill="none" stroke="#fff" strokeWidth="1.6">
              <path d="M18 2 L2 26 L18 50" />
            </svg>
          </BackIcon>
          <BackLabel>BACK TO HOME</BackLabel>
        </BackLink>
        <MarkerPin width="50" height="82" viewBox="0 0 50 82">
          <defs>
            <linearGradient id="pinFill" x1="0" y1="0" x2="0" y2="1">
              <stop offset="0" stopColor="#3f8dc4" />
              <stop offset="1" stopColor="#1a70c2" />
            </linearGradient>
            <filter id="pinShadow">
              <feGaussianBlur stdDeviation="4" />
            </filter>
          </defs>
          <path d="M25 80 L78 48 L60 38 L40 44 Z" fill="rgba(0,0,0,0.45)" filter="url(#pinShadow)" />
          <path d="M25 80 C21 62 2 44 2 25 A23 23 0 0 1 48 25 C48 44 29 62 25 80 Z" fill="url(#pinFill)" stroke="#2a6c9e" strokeWidth="2" />
          <circle cx="25" cy="27" r="14" fill="#2d79ad" />
          <circle cx="25" cy="27" r="10.5" fill="#f4f4f4" />
        </MarkerPin>
        <Popup>
          99 King street
          <PopupClose>×</PopupClose>
          <PopupTip />
        </Popup>
        <Attribution>
          <AttributionLink>Leaflet</AttributionLink> | Map data © <AttributionLink>OpenStreetMap</AttributionLink> contributors, Imagery © <AttributionLink>Mapbox</AttributionLink>
        </Attribution>
      </MapPanel>
      <LocationSection>
        <Heading>
          OUR
          <br />
          LOCATION
        </Heading>
        <Details>
          <StreetTitle>99 KING STREET</StreetTitle>
          <Paragraph>
            Newport
            <br />
            RI02840
            <br />
            United states of America
          </Paragraph>
          <Paragraph>
            Our newly opened gallery is located near the Edward King
            <br />
            House on 99 King Street, the Modern Art Gallery is free to all
            <br />
            visitors and open seven days a week from 8am to 9pm.
          </Paragraph>
        </Details>
      </LocationSection>
      <SiteFooter>
        <Logo>
          MODERN
          <br />
          ART GALLERY
        </Logo>
        <Blurb>
          The Modern Art Gallery is free to all visitors and open
          <br />
          seven days a week from 8am to 9pm. Find us at 99
          <br />
          King Street, Newport, USA.
        </Blurb>
        <Socials>
          <FacebookIcon />
          <InstagramIcon />
          <TwitterIcon color="#151515" />
        </Socials>
      </SiteFooter>
    </Page>
  );
}
